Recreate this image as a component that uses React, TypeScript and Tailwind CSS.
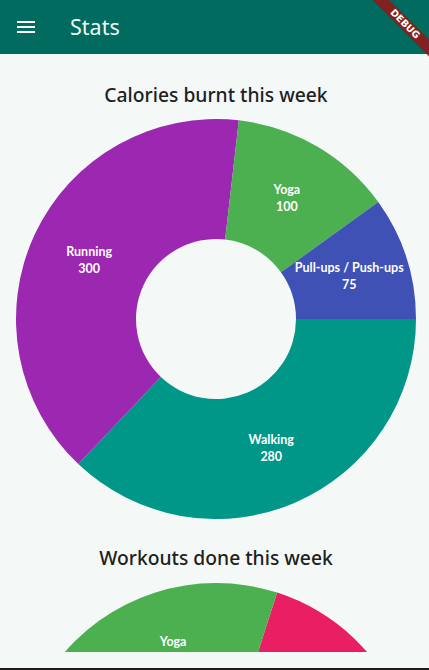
import React from "react";

type Slice = { label: string; value: number; color: string; hideLabel?: boolean };

const calories: Slice[] = [
  { label: "Walking", value: 280, color: "#009688" },
  { label: "Running", value: 300, color: "#9c27b0" },
  { label: "Yoga", value: 100, color: "#4caf50" },
  { label: "Pull-ups / Push-ups", value: 75, color: "#3f51b5" },
];

const workouts: Slice[] = [
  { label: "Pull-ups / Push-ups", value: 52.2, color: "#e91e63", hideLabel: true },
  { label: "Walking", value: 80, color: "#009688", hideLabel: true },
  { label: "Running", value: 156.5, color: "#9c27b0", hideLabel: true },
  { label: "Yoga", value: 71.3, color: "#4caf50" },
];

function arcPath(cx: number, cy: number, r0: number, r1: number, a0: number, a1: number) {
  const rad = (d: number) => (d * Math.PI) / 180;
  const p = (r: number, a: number) => [cx + r * Math.cos(rad(a)), cy + r * Math.sin(rad(a))];
  const large = a1 - a0 > 180 ? 1 : 0;
  const [x0, y0] = p(r1, a0);
  const [x1, y1] = p(r1, a1);
  const [x2, y2] = p(r0, a1);
  const [x3, y3] = p(r0, a0);
  if (r0 <= 0) {
    return `M${cx},${cy} L${x0},${y0} A${r1},${r1} 0 ${large} 1 ${x1},${y1} Z`;
  }
  return `M${x0},${y0} A${r1},${r1} 0 ${large} 1 ${x1},${y1} L${x2},${y2} A${r0},${r0} 0 ${large} 0 ${x3},${y3} Z`;
}

function Donut({
  slices,
  start,
  inner,
  values = true,
}: {
  slices: Slice[];
  start: number;
  inner: number;
  values?: boolean;
}) {
  const total = slices.reduce((s, x) => s + x.value, 0);
  let a = start;
  const parts = slices.map((s) => {
    const sweep = (s.value / total) * 360;
    const a0 = a;
    const a1 = a + sweep;
    a = a1;
    return { ...s, a0, a1 };
  });
  const cx = 200;
  const cy = 200;
  return (
    <svg width={400} height={400} viewBox="0 0 400 400" className="block shrink-0">
      {parts.map((p) => (
        <path key={p.label} d={arcPath(cx, cy, inner, 200, p.a0, p.a1)} fill={p.color} />
      ))}
      {parts
        .filter((p) => !p.hideLabel)
        .map((p) => {
          const mid = ((p.a0 + p.a1) / 2) * (Math.PI / 180);
          const x = cx + 140 * Math.cos(mid);
          const y = cy + 140 * Math.sin(mid);
          return (
            <text
              key={p.label + "t"}
              x={x}
              y={y}
              textAnchor="middle"
              fill="#ffffff"
              fontSize={12.5}
              fontWeight={700}
              style={{ fontFamily: "Lato, 'Noto Sans', sans-serif" }}
            >
              <tspan x={x} dy={-4}>
                {p.label}
              </tspan>
              {values && (
                <tspan x={x} dy={17}>
                  {p.value}
                </tspan>
              )}
            </text>
          );
        })}
    </svg>
  );
}

export default function App() {
  return (
    <div
      className="relative w-[429px] h-[670px] overflow-hidden bg-[#f4f9f8] flex flex-col"
      style={{ fontFamily: "'Noto Sans', sans-serif" }}
    >
      <header className="h-[54px] shrink-0 bg-[#006b5e] flex items-center pl-[14px]">
        <svg width={24} height={24} viewBox="0 0 24 24" fill="#ffffff">
          <path d="M3 18h18v-2H3v2zm0-5h18v-2H3v2zm0-7v2h18V6H3z" />
        </svg>
        <span className="ml-[32px] text-[21.5px] leading-none text-[#f1fbf9] font-normal">
          Stats
        </span>
      </header>

      <div className="h-[598px] shrink-0 overflow-hidden flex flex-col items-center pl-[3px]">
        <h2 className="mt-[27px] h-7 leading-7 text-[19.3px] font-medium text-[#1d2121]">
          Calories burnt this week
        </h2>
        <div className="mt-[10px]">
          <Donut slices={calories} start={0} inner={80} />
        </div>
        <h2 className="mt-[25px] h-7 leading-7 text-[19.3px] font-medium text-[#1d2121]">
          Workouts done this week
        </h2>
        <div className="mt-[11px]">
          <Donut slices={workouts} start={287.8} inner={0} values={false} />
        </div>
      </div>
      <div className="h-[16px] shrink-0" />
      <div className="h-[2px] shrink-0 bg-[#1a1a1a]" />

      <div className="absolute top-0 right-0 z-20 w-[80px] h-[60px] overflow-hidden pointer-events-none">
        <div className="absolute left-[16px] top-[18px] w-[80px] h-[12px] rotate-45 bg-[#8e1b1b]/90 flex items-center justify-center">
          <span
            className="text-[9.5px] leading-none font-bold text-white"
            style={{ fontFamily: "'DejaVu Sans', sans-serif" }}
          >
            DEBUG
          </span>
        </div>
      </div>
    </div>
  );
}
